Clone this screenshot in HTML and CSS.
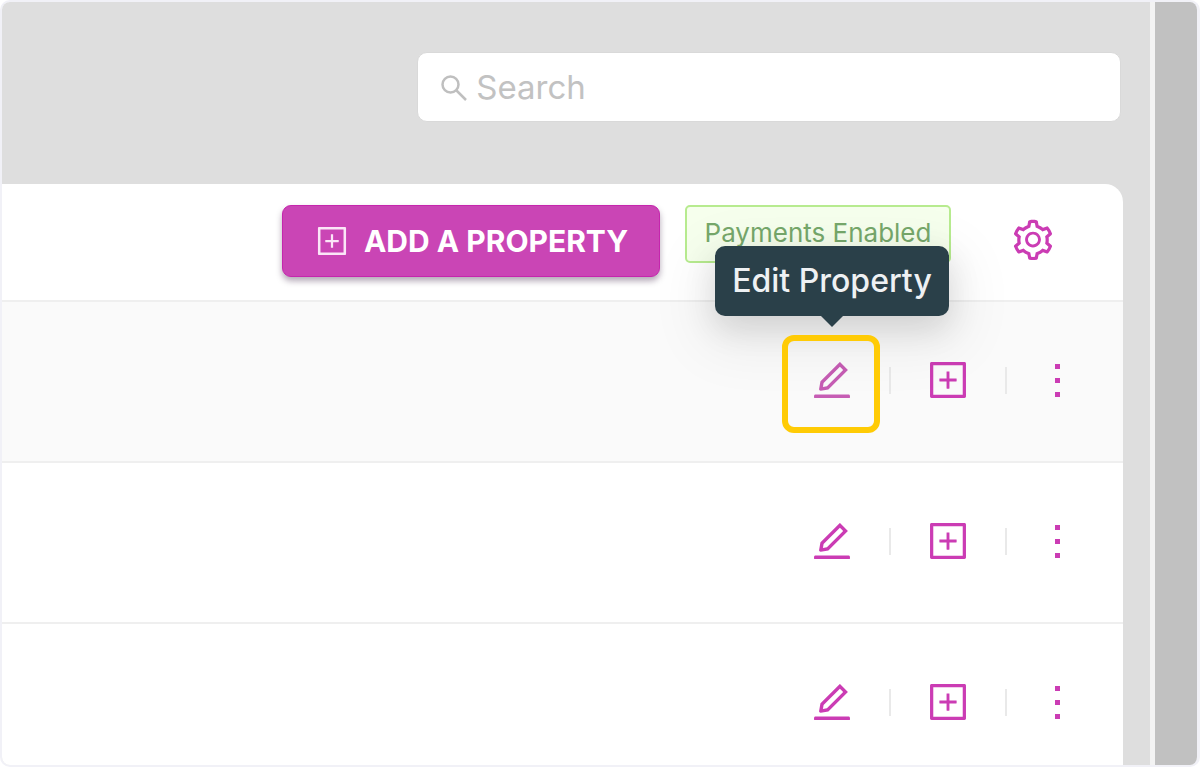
FILE: index.html
```html
<!DOCTYPE html>
<html lang="en">
<head>
    <meta charset="UTF-8">
    <meta name="viewport" content="width=device-width, initial-scale=1.0">
    <title>Properties</title>
    <link rel="stylesheet" href="styles.css">
</head>
<body>

    <!-- shared icons -->
    <svg class="sprite" aria-hidden="true">
        <symbol id="icon-edit" viewBox="0 0 1024 1024">
            <path d="M257.7 752c2 0 4-.2 6-.5L431.9 722c2-.4 3.9-1.3 5.3-2.8l423.9-423.9a9.96 9.96 0 000-14.1L694.9 114.9c-1.9-1.9-4.4-2.9-7.1-2.9s-5.2 1-7.1 2.9L256.8 538.8c-1.5 1.5-2.4 3.3-2.8 5.3l-29.5 168.2a33.5 33.5 0 009.4 29.8c6.6 6.4 14.9 9.9 23.8 9.9zm67.4-174.4L687.8 215l73.3 73.3-362.7 362.6-88.9 15.7 15.6-89zM880 836H144c-17.7 0-32 14.3-32 32v36c0 4.4 3.6 8 8 8h784c4.4 0 8-3.6 8-8v-36c0-17.7-14.3-32-32-32z"/>
        </symbol>
        <symbol id="icon-plus" viewBox="0 0 1024 1024">
            <path d="M328 544h152v152c0 4.400 3.600 8 8 8h48c4.400 0 8-3.600 8-8V544h152c4.400 0 8-3.600 8-8v-48c0-4.400-3.600-8-8-8H544V328c0-4.400-3.600-8-8-8h-48c-4.400 0-8 3.600-8 8v152H328c-4.400 0-8 3.600-8 8v48c0 4.400 3.600 8 8 8z"/>
            <path d="M880 112H144c-17.700 0-32 14.300-32 32v736c0 17.700 14.300 32 32 32h736c17.700 0 32-14.300 32-32V144c0-17.700-14.300-32-32-32zm-40 728H184V184h656v656z"/>
        </symbol>
        <symbol id="icon-more" viewBox="0 0 32 46">
            <path d="M14 7h5v5h-5zM14 21h5v5h-5zM14 35h5v5h-5z"/>
        </symbol>
        <symbol id="icon-gear" viewBox="0 0 1024 1024">
            <path d="M924.8 625.7l-65.5-56c3.1-19 4.700-38.400 4.700-57.800s-1.600-38.800-4.700-57.800l65.500-56a32.030 32.030 0 009.300-35.200l-.9-2.600a443.740 443.740 0 00-79.700-137.900l-1.800-2.100a32.120 32.120 0 00-35.100-9.500l-81.300 28.900c-30-24.600-63.500-44-99.700-57.600l-15.700-85a32.050 32.050 0 00-25.800-25.700l-2.700-.5c-52.100-9.400-106.900-9.400-159 0l-2.700.5a32.050 32.050 0 00-25.800 25.700l-15.800 85.400a351.860 351.860 0 00-99 57.400l-81.900-29.100a32 32 0 00-35.100 9.500l-1.800 2.100a446.020 446.020 0 00-79.700 137.900l-.9 2.600c-4.500 12.500-.8 26.500 9.300 35.200l66.300 56.600c-3.100 18.800-4.600 38-4.600 57.100 0 19.200 1.500 38.400 4.600 57.100L99 625.500a32.030 32.030 0 00-9.300 35.200l.9 2.600c18.100 50.400 44.900 96.900 79.700 137.900l1.800 2.100a32.120 32.120 0 0035.100 9.500l81.900-29.100c29.800 24.500 63.100 43.900 99 57.400l15.800 85.400a32.050 32.050 0 0025.800 25.700l2.700.5a449.400 449.400 0 00159 0l2.700-.5a32.050 32.050 0 0025.800-25.700l15.700-85a350 350 0 0099.700-57.600l81.300 28.900a32 32 0 0035.100-9.500l1.800-2.100c34.800-41.100 61.600-87.500 79.700-137.900l.9-2.600c4.500-12.300.8-26.300-9.300-35zM788.300 465.900c2.500 15.100 3.800 30.600 3.800 46.100s-1.300 31-3.800 46.100l-6.600 40.100 74.700 63.900a370.030 370.030 0 01-42.600 73.600L721 702.800l-31.400 25.800c-23.900 19.600-50.500 35-79.300 45.800l-38.100 14.300-17.900 97a377.500 377.500 0 01-85 0l-17.900-97.200-37.800-14.500c-28.500-10.800-55-26.200-78.700-45.700l-31.400-25.900-93.400 33.200c-17-22.900-31.200-47.600-42.600-73.600l75.500-64.500-6.500-40c-2.400-14.900-3.700-30.300-3.700-45.500 0-15.300 1.200-30.600 3.700-45.500l6.500-40-75.500-64.500c11.300-26.100 25.600-50.700 42.600-73.600l93.400 33.200 31.400-25.900c23.700-19.500 50.200-34.900 78.700-45.700l37.900-14.300 17.900-97.200c28.100-3.200 56.800-3.200 85 0l17.900 97 38.100 14.300c28.700 10.800 55.400 26.200 79.300 45.800l31.400 25.800 92.800-32.900c17 22.900 31.200 47.600 42.600 73.600L781.800 426l6.500 39.900zM512 326c-97.200 0-176 78.800-176 176s78.800 176 176 176 176-78.800 176-176-78.800-176-176-176zm79.200 255.200A111.600 111.600 0 01512 614c-29.900 0-58-11.700-79.200-32.800A111.600 111.600 0 01400 502c0-29.900 11.700-58 32.800-79.200C454 401.600 482.100 390 512 390c29.900 0 58 11.600 79.200 32.800A111.600 111.600 0 01624 502c0 29.900-11.700 58-32.800 79.200z"/>
        </symbol>
    </svg>

    <div class="frame">
        <main class="page">

            <!-- search -->
            <div class="topbar">
                <label class="search">
                    <svg class="search-icon" viewBox="0 0 28 28" aria-hidden="true"><circle cx="10.500" cy="11.500" r="8"/><path d="M16.500 17.500l9.500 9.500"/></svg>
                    <input type="search" class="search-input" placeholder="Search" aria-label="Search">
                </label>
            </div>

            <section class="card">
                <!-- card header -->
                <div class="card-header">
                    <button type="button" class="add-btn">
                        <svg class="add-icon" aria-hidden="true"><use href="#icon-plus"/></svg>
                        ADD A PROPERTY
                    </button>
                    <span class="tag">Payments Enabled</span>
                    <button type="button" class="icon-btn settings" aria-label="Settings"><svg class="icon"><use href="#icon-gear"/></svg></button>
                </div>

                <!-- property rows -->
                <div class="row active">
                    <div class="edit">
                        <button type="button" class="icon-btn" aria-label="Edit"><svg class="icon"><use href="#icon-edit"/></svg></button>
                        <span class="tooltip" role="tooltip">Edit Property</span>
                        <span class="highlight"></span>
                    </div>
                    <span class="divider"></span>
                    <button type="button" class="icon-btn" aria-label="Add"><svg class="icon"><use href="#icon-plus"/></svg></button>
                    <span class="divider"></span>
                    <button type="button" class="icon-btn more" aria-label="More"><svg class="icon"><use href="#icon-more"/></svg></button>
                </div>
                <div class="row">
                    <button type="button" class="icon-btn" aria-label="Edit"><svg class="icon"><use href="#icon-edit"/></svg></button>
                    <span class="divider"></span>
                    <button type="button" class="icon-btn" aria-label="Add"><svg class="icon"><use href="#icon-plus"/></svg></button>
                    <span class="divider"></span>
                    <button type="button" class="icon-btn more" aria-label="More"><svg class="icon"><use href="#icon-more"/></svg></button>
                </div>
                <div class="row">
                    <button type="button" class="icon-btn" aria-label="Edit"><svg class="icon"><use href="#icon-edit"/></svg></button>
                    <span class="divider"></span>
                    <button type="button" class="icon-btn" aria-label="Add"><svg class="icon"><use href="#icon-plus"/></svg></button>
                    <span class="divider"></span>
                    <button type="button" class="icon-btn more" aria-label="More"><svg class="icon"><use href="#icon-more"/></svg></button>
                </div>
            </section>
        </main>
        <div class="gutter"></div>
        <div class="scrollbar"></div>
    </div>

</body>
</html>
```
FILE: styles.css
```css
*{
    margin: 0;
    padding: 0;
    box-sizing: border-box;
}
body{
    font-family: Inter, "Open Sans", sans-serif;
    background: #fff;
}
button{
    border: none;
    background: none;
    font-family: inherit;
    cursor: pointer;
}
.sprite{
    position: absolute;
    width: 0;
    height: 0;
}
.frame{
    display: flex;
    height: 100vh;
    border: 2px solid #f1f1f7;
    border-right-width: 3px;
    border-radius: 10px;
    overflow: hidden;
}
.page{
    flex: 1;
    padding-right: 27px;
    background: #dedede;
    overflow: hidden;
}
.gutter{
    width: 5px;
    background: #f3f3f3;
}
.scrollbar{
    width: 42px;
    background: #c1c1c1;
}

/* search */
.topbar{
    display: flex;
    justify-content: flex-end;
    padding: 50px 2px 62px;
}
.search{
    display: flex;
    align-items: center;
    gap: 8px;
    width: 63%;
    height: 70px;
    padding: 0 22px;
    background: #fff;
    border: 1px solid #d9d9d9;
    border-radius: 10px;
}
.search-icon{
    width: 28px;
    height: 28px;
    fill: none;
    stroke: #bfbfbf;
    stroke-width: 2.5;
}
.search-input{
    flex: 1;
    min-width: 0;
    border: none;
    outline: none;
    background: none;
    font-family: inherit;
    font-size: 33px;
    color: #444;
}
.search-input::placeholder{
    color: #c2c2c2;
    opacity: 1;
}

/* card */
.card{
    background: #fff;
    border-radius: 0 18px 0 0;
}
.card-header{
    display: flex;
    justify-content: flex-end;
    align-items: flex-start;
    gap: 25px;
    height: 118px;
    padding: 21px 67px 0 20px;
    border-bottom: 2px solid #efefef;
}
.add-btn{
    display: flex;
    justify-content: center;
    align-items: center;
    gap: 14px;
    min-width: 378px;
    height: 72px;
    border: 1px solid #c526ad;
    border-radius: 9px;
    background: #ca45b5;
    box-shadow: 0 4px 6px rgba(40, 10, 50, 0.35);
    color: #fff;
    font-size: 30px;
    font-weight: 700;
    line-height: 36px;
    white-space: nowrap;
}
.add-icon{
    width: 36px;
    height: 36px;
    fill: #fbe6f7;
}
.tag{
    min-width: 266px;
    height: 58px;
    border: 2px solid #b7eb8f;
    border-radius: 5px;
    background: #f6ffed;
    color: #76a86b;
    font-size: 26px;
    line-height: 52px;
    text-align: center;
    white-space: nowrap;
}
.icon-btn{
    width: 46px;
    height: 46px;
}
.icon{
    display: block;
    width: 100%;
    height: 100%;
    fill: #cb3cb4;
}
.settings{
    margin: 12px 0 0 34px;
}

/* rows */
.row{
    display: flex;
    justify-content: flex-end;
    align-items: center;
    gap: 34px;
    height: 161px;
    padding: 0 50px 3px 20px;
    border-bottom: 2px solid #efefef;
}
.active{
    background: #fafafa;
}
.divider{
    width: 2px;
    height: 27px;
    background: #e9e9e9;
}
.more{
    width: 32px;
}
.edit{
    display: flex;
    position: relative;
}
.edit .icon{
    fill: #c65db4;
}
.tooltip{
    position: absolute;
    bottom: 87px;
    left: 50%;
    min-width: 234px;
    height: 70px;
    transform: translateX(-50%);
    border-radius: 10px;
    background: #2a4049;
    box-shadow: 0 12px 32px rgba(0, 0, 0, 0.12), 0 18px 56px 16px rgba(0, 0, 0, 0.06);
    color: #eef1f3;
    font-size: 32px;
    font-weight: 500;
    line-height: 70px;
    text-align: center;
    white-space: nowrap;
}
.tooltip:after{
    content: '';
    position: absolute;
    top: 100%;
    left: 50%;
    margin-left: -11px;
    border: 11px solid transparent;
    border-top-color: #2a4049;
    border-bottom: none;
}
.highlight{
    position: absolute;
    top: -22px;
    left: -27px;
    width: 98px;
    height: 98px;
    border: 6px solid #ffcb05;
    border-radius: 12px;
    pointer-events: none;
}
```
